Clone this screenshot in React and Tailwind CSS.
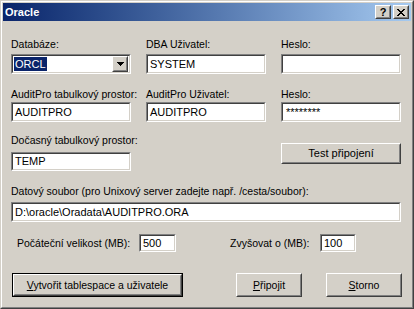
import React from 'react';
import clsx from 'clsx';

// classic 3D bevels
const Sunken = ({ className, innerClassName, children }) => (
    <div className={clsx("border border-t-[#808080] border-l-[#808080] border-b-white border-r-white", className)}>
        <div className={clsx("h-full border border-t-[#404040] border-l-[#404040] border-b-[#d4d0c8] border-r-[#d4d0c8] bg-white flex items-center text-[11px] text-black leading-none", innerClassName)}>
            {children}
        </div>
    </div>
);

const Raised = ({ className, innerClassName, children }) => (
    <div className={clsx("border border-t-white border-l-white border-b-[#404040] border-r-[#404040] bg-[#d4d0c8]", className)}>
        <div className={clsx("h-full border border-t-[#d4d0c8] border-l-[#d4d0c8] border-b-[#808080] border-r-[#808080] flex items-center justify-center text-[10.5px] text-black leading-none", innerClassName)}>
            {children}
        </div>
    </div>
);

const Label = ({ className, children }) => (
    <div className={clsx("text-[10.5px] leading-[13px] text-black whitespace-nowrap", className)}>{children}</div>
);

const CaptionButton = ({ children }) => (
    <Raised className="w-[16px] h-[14px]" innerClassName="text-[11px] font-bold">
        {children}
    </Raised>
);

const App = () => {
    return (
        <div className="w-[414px] h-[309px] bg-[#d4d0c8] border border-t-[#d4d0c8] border-l-[#d4d0c8] border-b-[#404040] border-r-[#404040] font-['Liberation_Sans',Arial,sans-serif] select-none">
            <div className="h-full border border-t-white border-l-white border-b-[#808080] border-r-[#808080] p-px flex flex-col">
                {/* Title bar */}
                <div className="h-[18px] flex items-center justify-between bg-gradient-to-r from-[#0a246a] to-[#a6caf0] pl-[2px] pr-[2px]">
                    <span className="text-white font-bold text-[11px] leading-none">Oracle</span>
                    <div className="flex gap-[2px]">
                        <CaptionButton>?</CaptionButton>
                        <CaptionButton>
                            <svg width="8" height="7" viewBox="0 0 8 7" shapeRendering="crispEdges">
                                <path d="M0 0h2v1H0zM6 0h2v1H6zM1 1h2v1H1zM5 1h2v1H5zM2 2h4v1H2zM3 3h2v1H3zM2 4h4v1H2zM1 5h2v1H1zM5 5h2v1H5zM0 6h2v1H0zM6 6h2v1H6z" fill="#000" />
                            </svg>
                        </CaptionButton>
                    </div>
                </div>

                {/* Body */}
                <div className="pl-[8px] flex flex-col">
                    {/* Row 1 */}
                    <div className="grid grid-cols-[120px_120px_120px] gap-x-[15px] mt-[17px]">
                        <div>
                            <Label>Databáze:</Label>
                            <Sunken className="mt-[3px] h-[20px]" innerClassName="pl-px pr-px">
                                <div className="flex-1 h-full flex items-center">
                                    <span className="bg-[#0a246a] text-white h-[14px] px-px flex items-center w-[33px]">ORCL</span>
                                </div>
                                <Raised className="w-[16px] h-[16px]">
                                    <svg width="7" height="4" viewBox="0 0 7 4" shapeRendering="crispEdges">
                                        <path d="M0 0h7v1H0zM1 1h5v1H1zM2 2h3v1H2zM3 3h1v1H3z" fill="#000" />
                                    </svg>
                                </Raised>
                            </Sunken>
                        </div>
                        <div>
                            <Label>DBA Uživatel:</Label>
                            <Sunken className="mt-[3px] h-[20px]" innerClassName="pl-[2px]">SYSTEM</Sunken>
                        </div>
                        <div>
                            <Label>Heslo:</Label>
                            <Sunken className="mt-[3px] h-[20px]" />
                        </div>
                    </div>

                    {/* Row 2 */}
                    <div className="grid grid-cols-[120px_120px_120px] gap-x-[15px] mt-[14px]">
                        <div>
                            <Label>AuditPro tabulkový prostor:</Label>
                            <Sunken className="mt-px h-[20px]" innerClassName="pl-[2px]">AUDITPRO</Sunken>
                        </div>
                        <div>
                            <Label>AuditPro Uživatel:</Label>
                            <Sunken className="mt-px h-[20px]" innerClassName="pl-[2px]">AUDITPRO</Sunken>
                        </div>
                        <div>
                            <Label>Heslo:</Label>
                            <Sunken className="mt-px h-[20px]" innerClassName="pl-[3px] text-[10px] text-[#222]">********</Sunken>
                        </div>
                    </div>

                    {/* Row 3 */}
                    <div className="grid grid-cols-[120px_120px_120px] gap-x-[15px] mt-[12px]">
                        <div>
                            <Label>Dočasný tabulkový prostor:</Label>
                            <Sunken className="mt-[5px] h-[19px]" innerClassName="pl-[2px]">TEMP</Sunken>
                        </div>
                        <div />
                        <div className="pt-[9px]">
                            <Raised className="h-[21px]" innerClassName="text-[11px]">Test připojení</Raised>
                        </div>
                    </div>

                    {/* Row 4 */}
                    <div className="mt-[14px]">
                        <Label>Datový soubor (pro Unixový server zadejte např. /cesta/soubor):</Label>
                        <Sunken className="mt-[4px] h-[20px] w-[390px]" innerClassName="pl-[2px]">D:\oracle\Oradata\AUDITPRO.ORA</Sunken>
                    </div>

                    {/* Row 5 */}
                    <div className="flex items-center mt-[12px]">
                        <div className="w-[128px] pl-[6px]">
                            <Label>Počáteční velikost (MB):</Label>
                        </div>
                        <Sunken className="w-[37px] h-[18px]" innerClassName="pl-[2px]">500</Sunken>
                        <div className="ml-[54px] w-[90px]">
                            <Label>Zvyšovat o (MB):</Label>
                        </div>
                        <Sunken className="w-[36px] h-[18px]" innerClassName="pl-[2px]">100</Sunken>
                    </div>

                    {/* Row 6 */}
                    <div className="flex mt-[21px]">
                        <div className="ml-px w-[171px] h-[24px] border border-black">
                            <Raised className="h-full">
                                <span><span className="underline">V</span>ytvořit tablespace a uživatele</span>
                            </Raised>
                        </div>
                        <Raised className="ml-[53px] w-[66px] h-[24px]">
                            <span><span className="underline">P</span>řipojit</span>
                        </Raised>
                        <Raised className="ml-[24px] w-[76px] h-[24px]">
                            <span><span className="underline">S</span>torno</span>
                        </Raised>
                    </div>
                </div>
            </div>
        </div>
    );
};

export default App;
